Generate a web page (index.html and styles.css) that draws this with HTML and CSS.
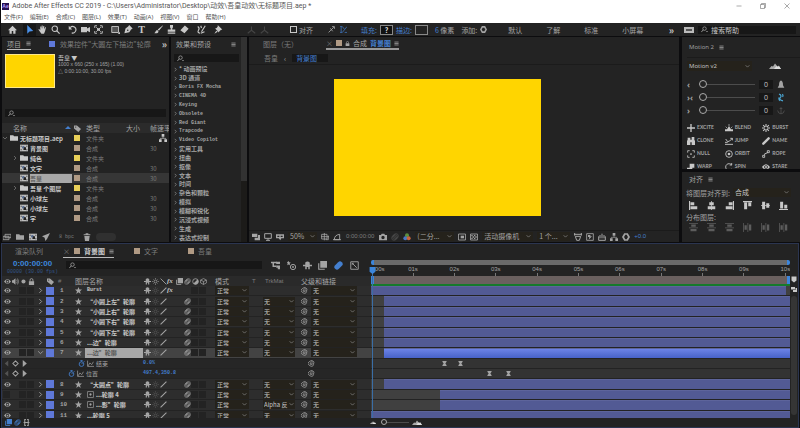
FILE: index.html
```html
<!DOCTYPE html>
<html lang="zh-CN">
<head>
  <meta charset="utf-8">
  <title>Adobe After Effects CC 2019</title>
  <link rel="stylesheet" href="styles.css">
</head>
<body>
  <svg class="sprite" aria-hidden="true">
    <symbol id="home" viewBox="0 0 12 12"><path fill="currentColor" d="M6 1 0 7h2v4.500h3V8h2v3.500h3V7h2z"/></symbol>
    <symbol id="arrow" viewBox="0 0 12 12"><path fill="currentColor" d="M3 0v11.500l3-3 5-.5z"/></symbol>
    <symbol id="hand" viewBox="0 0 12 12"><path fill="currentColor" d="M3 7V2h1.200v3L5 .8h1.200V5l1-3.800h1.200L8 5.500 9.500 3h1.200L9.500 8 8 11.500H4.500L.5 6l1-.8z"/></symbol>
    <symbol id="zoom" viewBox="0 0 12 12"><circle cx="5" cy="5" r="3.600" fill="none" stroke="currentColor" stroke-width="1.400"/><path d="m7.500 7.500 4 4" stroke="currentColor" stroke-width="1.600"/></symbol>
    <symbol id="find" viewBox="0 0 12 12"><circle cx="6" cy="4.500" r="3" fill="none" stroke="currentColor" stroke-width="1.300"/><path d="M4 6.500.5 10.500" stroke="currentColor" stroke-width="1.500"/><path fill="currentColor" d="M8.500 8.500H12l-1.700 2z"/></symbol>
    <symbol id="rotate" viewBox="0 0 12 12"><path d="M3 3.500A4.300 4.300 0 1 1 5 10.500" fill="none" stroke="currentColor" stroke-width="1.500"/><path fill="currentColor" d="M1 1v5h4.500z"/></symbol>
    <symbol id="camera" viewBox="0 0 12 12"><path fill="currentColor" d="M0 2.500h8v2l4-2v7l-4-2v2H0z"/></symbol>
    <symbol id="pan" viewBox="0 0 12 12"><path d="M1 4V1h3M8 1h3v3M11 8v3H8M4 11H1V8M3 3l6 6M9 3 3 9" fill="none" stroke="currentColor" stroke-width="1.200"/><circle cx="6" cy="6" r="1.800" fill="currentColor"/></symbol>
    <symbol id="rect" viewBox="0 0 12 12"><path d="M1 2h9v8H1z" fill="#555" stroke="currentColor" stroke-width="1.200"/><path fill="currentColor" d="M12 9v3H9z"/></symbol>
    <symbol id="pen" viewBox="0 0 12 12"><path fill="currentColor" d="M7 0 5.500 2 2 4.500.5 11 7 9.500l2.500-3.500 2-1.500zM5 6a1 1 0 1 1 0 2 1 1 0 0 1 0-2"/></symbol>
    <symbol id="brush" viewBox="0 0 12 12"><path fill="currentColor" d="M11.500.5 5 6l1.500 1.500L12 1zM4.500 6.800c-2 0-2 2.200-4 4.200 3 .6 5.500-.5 5.500-2.500z"/></symbol>
    <symbol id="stamp" viewBox="0 0 12 12"><path fill="currentColor" d="M4 0h4v3L7 4.500V6h4v3H1V6h4V4.500L4 3zM1 10h10v1.500H1z"/></symbol>
    <symbol id="eraser" viewBox="0 0 12 12"><path fill="currentColor" d="m6.500.5 5 4.500L6 11 .5 7z"/></symbol>
    <symbol id="roto" viewBox="0 0 12 12"><path d="M1 2q3 2 1 5t2 4M6 9l5-8M5 11l5-2M5 1l1 3" fill="none" stroke="currentColor" stroke-width="1.500"/></symbol>
    <symbol id="pin" viewBox="0 0 12 12"><path fill="currentColor" d="M5 0 11 6 9 6.500 7 8.500 6.500 10 1.500 4.500l2-.5L5 2zM3 7.500.5 11.500 5 9z"/></symbol>
    <symbol id="axis" viewBox="0 0 12 12"><path d="M6 2v5L1 11M6 7l5 4" fill="none" stroke="currentColor" stroke-width="1.400"/></symbol>
    <symbol id="snap" viewBox="0 0 12 12"><path d="m1 11 4-4 5-5M7 1h4v4M4 4l4 5" fill="none" stroke="currentColor" stroke-width="1.500"/></symbol>
    <symbol id="bounds" viewBox="0 0 12 12"><path d="M0 1h4L8 6l4-5M0 11h4l4-5M8 11h4M2 1v10" fill="none" stroke="currentColor" stroke-width="1.200"/></symbol>
    <symbol id="menu" viewBox="0 0 12 12"><path d="M1 2.500h10M1 6h10M1 9.500h10" stroke="currentColor" stroke-width="1.800"/></symbol>
    <symbol id="lock" viewBox="0 0 12 12"><path fill="currentColor" d="M1.500 5.500h9V12h-9z"/><path d="M3.500 6V3.500a2.500 2.500 0 0 1 5 0V6" fill="none" stroke="currentColor" stroke-width="1.500"/></symbol>
    <symbol id="folder" viewBox="0 0 12 12"><path fill="currentColor" d="M0 2h5l1 1.500h6V10H0z"/></symbol>
    <symbol id="comp" viewBox="0 0 12 12"><path fill="#bbb" d="M0 1h12v10H0z"/><path fill="#333" d="M1 2.500h1.500v1.500H1zM1 8h1.500v1.500H1zM9.500 2.500H11v1.500H9.500zM9.500 8H11v1.500H9.500z"/><circle cx="5" cy="5" r="2" fill="#566b91"/><path fill="#222" d="M6 5h3v4H5z"/></symbol>
    <symbol id="tag" viewBox="0 0 12 12"><path fill="currentColor" d="M0 1h5l7 6-4.500 5L0 6zM3 2.500a1 1 0 1 0 0 2 1 1 0 0 0 0-2" fill-rule="evenodd"/></symbol>
    <symbol id="tree" viewBox="0 0 12 12"><path fill="currentColor" d="M4 0h4v4H4zM0 8h4v4H0zM8 8h4v4H8z"/><path d="M6 4v2.500M2 8V6.500h8V8" fill="none" stroke="currentColor"/></symbol>
    <symbol id="footage" viewBox="0 0 12 12"><path d="M3 2h9v5H3zM0 5h9v5H0z" fill="#333" stroke="currentColor" stroke-width="1.200"/></symbol>
    <symbol id="rocket" viewBox="0 0 12 12"><path fill="currentColor" d="M12 0 0 5l4 2 1 5 2.500-3z"/></symbol>
    <symbol id="trash" viewBox="0 0 12 12"><path fill="currentColor" d="M1 2h3V.5h4V2h3v1.500H1zM2 4.500h8L9 12H3z"/></symbol>
    <symbol id="eye" viewBox="0 0 12 12"><path fill="currentColor" fill-rule="evenodd" d="M0 6q6-8 12 0-6 8-12 0m6-2.800a2.800 2.800 0 1 0 0 5.600 2.800 2.800 0 0 0 0-5.600"/><circle cx="6" cy="6" r="1.500" fill="currentColor"/></symbol>
    <symbol id="sound" viewBox="0 0 12 12"><path fill="currentColor" d="M0 4h2l4-3.500v11L2 8H0z"/><path d="M8 3q2 3 0 6M9.500 1q3.500 5 0 10" fill="none" stroke="currentColor" stroke-width="1.200"/></symbol>
    <symbol id="dot" viewBox="0 0 12 12"><circle cx="6" cy="6" r="3.500" fill="currentColor"/></symbol>
    <symbol id="shy" viewBox="0 0 12 12"><path fill="currentColor" d="M3 5V2q3-3 6 0v3h3v2H9v4H7V8H5v3H3V7H0V5z"/></symbol>
    <symbol id="sun" viewBox="0 0 12 12"><circle cx="6" cy="6" r="2.500" fill="none" stroke="currentColor" stroke-width="1.300"/><path d="M6 0v2M6 10v2M0 6h2M10 6h2M2 2l1 1M9 9l1 1M10 2 9 3M2 10l1-1" stroke="currentColor"/></symbol>
    <symbol id="slash" viewBox="0 0 12 12"><path d="M1 11 11 1" stroke="currentColor" stroke-width="1.800"/></symbol>
    <symbol id="backslash" viewBox="0 0 12 12"><path d="m1 1 10 10" stroke="currentColor" stroke-width="1.500"/></symbol>
    <symbol id="frames" viewBox="0 0 12 12"><path fill="currentColor" d="M3 0h9v9H3z"/><path d="M1 3v8h8" fill="none" stroke="currentColor" stroke-width="1.500"/></symbol>
    <symbol id="blur" viewBox="0 0 12 12"><g fill="none" stroke="currentColor"><circle cx="7.500" cy="4.500" r="3.500"/><circle cx="6" cy="6" r="3.500"/><circle cx="4.500" cy="7.500" r="3.500"/></g></symbol>
    <symbol id="blur-on" viewBox="0 0 12 12"><path d="m4 8 4-4" stroke="currentColor" stroke-width="7" stroke-linecap="round"/></symbol>
    <symbol id="half" viewBox="0 0 12 12"><circle cx="6" cy="6" r="4.800" fill="none" stroke="currentColor" stroke-width="1.400"/><path fill="currentColor" d="M9.400 2.600A4.800 4.800 0 0 1 2.600 9.400z"/></symbol>
    <symbol id="cube" viewBox="0 0 12 12"><path d="m6 1 5 2.500v5L6 11 1 8.500v-5zM1 3.500 6 6l5-2.500M6 6v5" fill="none" stroke="currentColor" stroke-width="1.200"/></symbol>
    <symbol id="star" viewBox="0 0 12 12"><path fill="currentColor" d="m6 0 1.700 4.200 4.300.2-3.400 2.800L9.800 12 6 9.200 2.200 12l1.200-4.800L0 4.400l4.300-.2z"/></symbol>
    <symbol id="swirl" viewBox="0 0 12 12"><path d="M6 6q1.800-.6 1.500 1T5 8 4 5t4-1.500T9.500 8 6 11 1 8 2 3t5-2 4 3" fill="none" stroke="currentColor" stroke-width="1.300"/></symbol>
    <symbol id="watch" viewBox="0 0 12 12"><circle cx="6" cy="7" r="4" fill="none" stroke="currentColor" stroke-width="1.500"/><path d="M4 .8h4M6 1v2M6 7l2-2M10 2l1.500 1.500" stroke="currentColor" stroke-width="1.300"/></symbol>
    <symbol id="graph" viewBox="0 0 12 12"><path d="M1 1v10h11M2 10l3-5 3 3 3-5" fill="none" stroke="currentColor" stroke-width="1.200"/></symbol>
    <symbol id="matte" viewBox="0 0 12 12"><path d="M1 1h10v10H1z" fill="#222" stroke="currentColor" stroke-width="1.200"/><circle cx="6" cy="6" r="2" fill="currentColor"/></symbol>
    <symbol id="key" viewBox="0 0 12 12"><path fill="currentColor" d="M1 0h10v2L8 6l3 4v2H1v-2l3-4-3-4z"/></symbol>
    <symbol id="prev" viewBox="0 0 12 12"><path fill="currentColor" d="M9 1v10L3 6z"/></symbol>
    <symbol id="next" viewBox="0 0 12 12"><path fill="currentColor" d="M3 0v12l7-6z"/></symbol>
    <symbol id="diamond" viewBox="0 0 12 12"><path d="m6 1.500 4.500 4.500L6 10.500 1.500 6z" fill="none" stroke="currentColor" stroke-width="1.800"/></symbol>
    <symbol id="chevron" viewBox="0 0 12 12"><path d="m4 2 4 4-4 4" fill="none" stroke="currentColor" stroke-width="1.500"/></symbol>
    <symbol id="flow" viewBox="0 0 12 12"><path d="M0 2h8M3 2v5h4" fill="none" stroke="currentColor" stroke-width="2"/><path fill="currentColor" d="M7 1h5v3H7zM7 6h5v5H9V9H7z"/></symbol>
    <symbol id="draft" viewBox="0 0 12 12"><circle cx="8" cy="8" r="3.500" fill="none" stroke="currentColor" stroke-width="1.300"/><circle cx="8" cy="8" r="1.200" fill="currentColor"/><path fill="currentColor" d="m2 0 1 1.500 2 .5-1.500 1.500.5 2L2 4.500 0 5.500 1 3.500 0 2z"/></symbol>
    <symbol id="graph-box" viewBox="0 0 12 12"><path d="M1 1h10v10H1zM3 3l6 6M3 5V3h2" fill="none" stroke="currentColor" stroke-width="1.200"/></symbol>
    <symbol id="monitor" viewBox="0 0 12 12"><path d="M1 1h10v7H1zM6 8v3M3 11h6" fill="none" stroke="currentColor" stroke-width="1.500"/></symbol>
    <symbol id="stack" viewBox="0 0 12 12"><path fill="currentColor" d="M0 1h8v5H0zM4 7h5V3h3v8H4z"/></symbol>
    <symbol id="goggles" viewBox="0 0 12 12"><path fill="currentColor" fill-rule="evenodd" d="M0 2h12v6H8L6.500 11 4 8H0zm2 2v2h3V4zm5 0v2h3V4z"/></symbol>
    <symbol id="grid" viewBox="0 0 12 12"><path d="M1 2h8v7H1zM5 0v11M0 5.500h12M11 4v6H7" fill="none" stroke="currentColor" stroke-width="1.200"/></symbol>
    <symbol id="mask" viewBox="0 0 12 12"><path d="M2 10Q2 3 10 2v8zM0 10h12" fill="none" stroke="currentColor" stroke-width="1.400"/></symbol>
    <symbol id="photo" viewBox="0 0 12 12"><path fill="currentColor" fill-rule="evenodd" d="M0 3h3l1-2h4l1 2h3v8H0zm6 1.200a2.500 2.500 0 1 0 0 5 2.500 2.500 0 0 0 0-5"/></symbol>
    <symbol id="rgb" viewBox="0 0 12 12"><circle cx="6" cy="3.500" r="3" fill="#5b8f3f"/><circle cx="3.500" cy="8" r="3" fill="#4a78c4"/><circle cx="8.500" cy="8" r="3" fill="#c8643c"/></symbol>
    <symbol id="roi" viewBox="0 0 12 12"><path d="M.8 1.500h10.400v9H.8z" fill="none" stroke="currentColor" stroke-width="1.300"/><path fill="currentColor" d="M4 4h5v4H4z"/></symbol>
    <symbol id="checker" viewBox="0 0 12 12"><path d="M.8 1.500h10.400v9H.8z" fill="none" stroke="currentColor" stroke-width="1.300"/><path fill="currentColor" d="M2 3h2v2H2zM6 3h2v2H6zM4 5h2v2H4zM8 5h2v2H8zM2 7h2v2H2zM6 7h2v2H6z"/></symbol>
    <symbol id="ratio" viewBox="0 0 12 12"><path d="M0 2h12M2 5h8l-2 6H4zM1 0v4M11 0v4" fill="none" stroke="currentColor" stroke-width="1.500"/></symbol>
    <symbol id="fast" viewBox="0 0 12 12"><path d="M1 1h10v10H1z" fill="none" stroke="currentColor" stroke-width="1.300"/><path fill="currentColor" d="M3 3h4L6 5h3L4 10l1-4H3z"/></symbol>
    <symbol id="chart" viewBox="0 0 12 12"><path d="M1 5v6h10V5M3 8V3M6 8V1M9 8V3" fill="none" stroke="currentColor" stroke-width="1.500"/></symbol>
    <symbol id="aperture" viewBox="0 0 12 12"><path d="m4 1.500h4L10.500 6 8 10.500H4L1.500 6z" fill="none" stroke="currentColor" stroke-width="2.600"/></symbol>
    <symbol id="hills" viewBox="0 0 24 12"><path fill="#aaa" d="M0 12 5 6l3 1 4-6 5 6 2-2 5 7z"/><path fill="#ddd" d="m10 12 5-6 3 2 2-2 4 6z"/></symbol>
    <symbol id="bell" viewBox="0 0 12 12"><path fill="currentColor" d="M6 0q3 1 3 7l2 4H1l2-4q0-6 3-7"/></symbol>
    <symbol id="bolt" viewBox="0 0 12 12"><path d="M3 1q5 2 2 5t4 5M8 1q2 3 0 4M3 6q-1 3 1 5" fill="none" stroke="currentColor" stroke-width="1.800"/></symbol>
    <symbol id="anchor" viewBox="0 0 12 12"><path d="M6 1v10M1 6q1 5 5 5t5-5M4 3h4" fill="none" stroke="currentColor" stroke-width="1.200"/></symbol>
    <symbol id="plus" viewBox="0 0 12 12"><path d="M6 0v12M0 6h12" stroke="currentColor" stroke-width="2"/></symbol>
    <symbol id="blend" viewBox="0 0 12 12"><path fill="currentColor" d="M0 8h3l3-5 3 5h3v3H0z"/><path d="M6 0v3M1 4l2 2M11 4 9 6" stroke="currentColor"/></symbol>
    <symbol id="burst" viewBox="0 0 12 12"><path d="M6 0v4M6 8v4M0 6h4M8 6h4M1.700 1.700l3 3M7.300 7.300l3 3M10.300 1.700l-3 3M4.700 7.300l-3 3" stroke="currentColor" stroke-width="1.600"/></symbol>
    <symbol id="clone" viewBox="0 0 12 12"><path fill="currentColor" d="M1 4V1h4v3h2V0h4v4l1 2v6H7V8H5v4H0V6z"/></symbol>
    <symbol id="jump" viewBox="0 0 12 12"><path d="M0 11h12M1 3l3 4 3-1 4-4M8 2h3v3M0 8h4" fill="none" stroke="currentColor" stroke-width="1.400"/></symbol>
    <symbol id="pencil" viewBox="0 0 12 12"><path d="m2 10 8-8" stroke="currentColor" stroke-width="3.600" stroke-linecap="round"/></symbol>
    <symbol id="null" viewBox="0 0 12 12"><path d="M1 4V1h3M8 1h3v3M11 8v3H8M4 11H1V8" fill="none" stroke="currentColor" stroke-width="1.200"/><circle cx="6" cy="6" r="1.300" fill="currentColor"/></symbol>
    <symbol id="orbit" viewBox="0 0 12 12"><circle cx="6" cy="6" r="5" fill="none" stroke="currentColor" stroke-width="1.300"/><circle cx="6" cy="6" r="2" fill="currentColor"/></symbol>
    <symbol id="rope" viewBox="0 0 12 12"><path d="M8 1h3v3H8zM1 8h3v3H1zM4 8q-1-3 2-3t2-2" fill="none" stroke="currentColor" stroke-width="1.300"/></symbol>
    <symbol id="warp" viewBox="0 0 12 12"><path fill="currentColor" d="M4 1h7v6H8v3H0V7h4z"/></symbol>
    <symbol id="spin" viewBox="0 0 12 12"><path d="M10 3A5 5 0 1 0 10 9M10 0v3H7" fill="none" stroke="currentColor" stroke-width="1.300"/></symbol>
    <symbol id="al-left" viewBox="0 0 12 12"><path fill="currentColor" d="M0 0h1.500v12H0zM2 1.500h5v4H2zM2 7h9v4H2z"/></symbol>
    <symbol id="al-center" viewBox="0 0 12 12"><path fill="currentColor" d="M5.500 0h1v12h-1zM3 1.500h6v4H3zM1 7h10v4H1z"/></symbol>
    <symbol id="al-right" viewBox="0 0 12 12"><path fill="currentColor" d="M10.500 0H12v12h-1.500zM5 1.500h5v4H5zM1 7h9v4H1z"/></symbol>
    <symbol id="al-top" viewBox="0 0 12 12"><path fill="currentColor" d="M0 0h12v1.500H0zM1.500 2h4v9h-4zM7 2h4v5H7z"/></symbol>
    <symbol id="al-middle" viewBox="0 0 12 12"><path fill="currentColor" d="M0 5.500h12v1H0zM1.500 1h4v10h-4zM7 3h4v6H7z"/></symbol>
    <symbol id="al-bottom" viewBox="0 0 12 12"><path fill="currentColor" d="M0 10.500h12V12H0zM1.500 1h4v9h-4zM7 5h4v5H7z"/></symbol>
    <symbol id="di-rows" viewBox="0 0 12 12"><path fill="currentColor" d="M0 0h12v1H0zM3 2h6v3H3zM0 6h12v1H0zM2 8h8v3H2z"/></symbol>
    <symbol id="di-cols" viewBox="0 0 12 12"><path fill="currentColor" d="M0 0h1v12H0zM2 3h3v6H2zM6 0h1v12H6zM8 2h3v8H8z"/></symbol>
    <symbol id="marker" viewBox="0 0 12 12"><path fill="currentColor" d="M1 0h10v8l-5 4-5-4z"/></symbol>
    <symbol id="minimize" viewBox="0 0 12 12"><path d="M1 6h10" stroke="currentColor"/></symbol>
    <symbol id="restore" viewBox="0 0 12 12"><path d="M1 3h8v8H1zM3 3V1h8v8H9" fill="none" stroke="currentColor"/></symbol>
    <symbol id="close" viewBox="0 0 12 12"><path d="m1 1 10 10M11 1 1 11" stroke="currentColor"/></symbol>
    <symbol id="braces" viewBox="0 0 12 12"><path d="M5 1H3v10h2M7 1h2v10H7M1 6h10" fill="none" stroke="currentColor" stroke-width="1.800"/></symbol>
  </svg>

  <div class="app">
    <header class="titlebar">
      <div class="title">
        <span class="logo">Ae</span>
        <h1>Adobe After Effects CC 2019 - C:\Users\Administrator\Desktop\动效\吾皇动效\无标题项目.aep *</h1>
        <div class="window-buttons">
          <button aria-label="最小化"><svg class="icon"><use href="#minimize"/></svg></button>
          <button aria-label="还原"><svg class="icon"><use href="#restore"/></svg></button>
          <button aria-label="关闭"><svg class="icon"><use href="#close"/></svg></button>
        </div>
      </div>
      <nav class="menu">
        <button>文件(F)</button><button>编辑(E)</button><button>合成(C)</button><button>图层(L)</button><button>效果(T)</button><button>动画(A)</button><button>视图(V)</button><button>窗口</button><button>帮助(H)</button>
      </nav>
    </header>

    <div class="toolbar">
      <div class="tools" id="tools"></div>
      <label class="snap"><input type="checkbox">对齐</label>
      <div class="snap-icons">
        <svg class="icon"><use href="#snap"/></svg>
        <svg class="icon blue"><use href="#bounds"/></svg>
      </div>
      <div class="shape-options">
        <a href="#fill">填充:</a><button class="well">?</button>
        <a href="#stroke">描边:</a><button class="well dark" aria-label="描边颜色"></button>
        <span class="stroke-width"><a href="#width">6</a> 像素</span>
        <span>添加:</span><svg class="icon"><use href="#aperture"/></svg>
      </div>
      <nav class="workspaces">
        <button>默认</button><button>了解</button><button>标准</button><button>小屏幕</button>
      </nav>
      <span class="more">»</span>
      <span class="badge"></span>
      <label class="search help"><svg class="icon"><use href="#find"/></svg><input type="text" placeholder="搜索帮助" aria-label="搜索帮助"></label>
    </div>

    <main class="panels">
      <section class="panel project">
        <div class="tabs">
          <button class="tab active">项目 <svg class="icon"><use href="#menu"/></svg></button>
          <button class="tab dim"><i class="swatch blue-bg"></i>效果控件"大圆左下描边"轮廓</button>
          <span class="more">»</span>
        </div>
        <div class="preview">
          <div class="thumb"></div>
          <div class="info">
            <b>吾皇 <span class="drop">▼</span></b>
            <span>1000 x 660 (250 x 165) (1.00)</span>
            <span>△ 0:00:10:00, 30.00 fps</span>
          </div>
        </div>
        <label class="search"><svg class="icon"><use href="#find"/></svg><input type="text" aria-label="搜索项目"></label>
        <table class="items">
          <colgroup><col class="c-name"><col class="c-tag"><col class="c-type"><col class="c-size"><col></colgroup>
          <thead>
            <tr><th>名称<span class="sort"></span></th><th><svg class="icon"><use href="#tag"/></svg></th><th>类型</th><th>大小</th><th>帧速率</th></tr>
          </thead>
          <tbody id="items"></tbody>
        </table>
        <div class="project-foot">
          <svg class="icon"><use href="#footage"/></svg>
          <svg class="icon"><use href="#folder"/></svg>
          <svg class="icon"><use href="#comp"/></svg>
          <svg class="icon"><use href="#rocket"/></svg>
          <button class="bpc">8 bpc</button>
          <svg class="icon"><use href="#trash"/></svg>
          <span class="hscroll"></span>
        </div>
      </section>

      <section class="panel effects">
        <div class="effects-main">
          <div class="tabs"><button class="tab">效果和预设</button><svg class="icon"><use href="#menu"/></svg></div>
          <label class="search"><svg class="icon"><use href="#find"/></svg><input type="text" aria-label="搜索效果"></label>
          <ul class="effect-list" id="effects"></ul>
        </div>
        <div class="scroll"><span></span></div>
      </section>

      <section class="panel viewer">
        <div class="tabs">
          <button class="tab dim">图层（无）</button>
          <button class="tab active"><span class="x">×</span><i class="swatch sand"></i><svg class="icon"><use href="#lock"/></svg>合成 <b class="blue">背景图</b> <svg class="icon"><use href="#menu"/></svg></button>
        </div>
        <nav class="crumbs"><a href="#wuhuang">吾皇</a><span>‹</span><a class="current" href="#bg">背景图</a></nav>
        <div class="stage"><div class="canvas"></div></div>
        <div class="viewer-foot">
          <svg class="icon"><use href="#stack"/></svg>
          <svg class="icon"><use href="#monitor"/></svg>
          <svg class="icon"><use href="#goggles"/></svg>
          <select class="s-zoom" aria-label="放大率"><option>50%</option></select>
          <svg class="icon"><use href="#grid"/></svg>
          <svg class="icon"><use href="#mask"/></svg>
          <span class="time">0:00:00:00</span>
          <svg class="icon"><use href="#photo"/></svg>
          <svg class="icon faint"><use href="#blur"/></svg>
          <svg class="icon"><use href="#rgb"/></svg>
          <select class="s-res" aria-label="分辨率"><option>(二分...</option></select>
          <svg class="icon"><use href="#roi"/></svg>
          <svg class="icon"><use href="#checker"/></svg>
          <select class="s-cam" aria-label="3D 视图"><option>活动摄像机</option></select>
          <select class="s-view" aria-label="视图布局"><option>1 个...</option></select>
          <svg class="icon"><use href="#ratio"/></svg>
          <svg class="icon"><use href="#fast"/></svg>
          <svg class="icon"><use href="#chart"/></svg>
          <svg class="icon"><use href="#tree"/></svg>
          <svg class="icon"><use href="#aperture"/></svg>
          <a href="#exposure">+0.0</a>
        </div>
      </section>

      <div class="side">
        <section class="panel motion">
          <div class="tabs"><button class="tab">Motion 2</button><svg class="icon"><use href="#menu"/></svg></div>
          <div class="motion-top">
            <select aria-label="Motion 版本"><option>Motion v2</option></select>
            <svg class="hills"><use href="#hills"/></svg>
          </div>
          <div class="slider"><span>‹</span><input type="range" value="0" aria-label="缓入"><output>0</output><svg class="icon"><use href="#bell"/></svg></div>
          <div class="slider"><span>›‹</span><input type="range" value="0" aria-label="缓动"><output>0</output><svg class="icon sky"><use href="#bolt"/></svg></div>
          <div class="slider"><span>›</span><input type="range" value="0" aria-label="缓出"><output>0</output><svg class="icon faint"><use href="#anchor"/></svg></div>
          <div class="actions" id="actions"></div>
        </section>
        <section class="panel align">
          <div class="tabs"><button class="tab">对齐</button><svg class="icon"><use href="#menu"/></svg></div>
          <label class="align-to">将图层对齐到: <select><option>合成</option></select></label>
          <div class="align-row" id="align"></div>
          <div class="align-label">分布图层:</div>
          <div class="align-row faint" id="distribute"></div>
        </section>
      </div>
    </main>

    <section class="timeline">
      <div class="tabs">
        <button class="tab dim">渲染队列</button>
        <button class="tab active"><span class="x">×</span><i class="swatch sand"></i><b>背景图</b> <svg class="icon"><use href="#menu"/></svg></button>
        <button class="tab other dim"><i class="swatch sand"></i>文字</button>
        <button class="tab other dim"><i class="swatch sand"></i>吾皇</button>
      </div>
      <div class="timeline-body">
        <div class="layers">
          <div class="layers-top">
            <div class="clock"><b>0:00:00:00</b><span>00000 (30.00 fps)</span></div>
            <label class="search"><svg class="icon"><use href="#find"/></svg><input type="text" aria-label="搜索图层"></label>
            <div class="comp-switches">
              <svg class="icon"><use href="#flow"/></svg>
              <svg class="icon"><use href="#draft"/></svg>
              <svg class="icon"><use href="#shy"/></svg>
              <svg class="icon"><use href="#frames"/></svg>
              <svg class="icon blue"><use href="#blur-on"/></svg>
              <svg class="icon"><use href="#graph-box"/></svg>
            </div>
          </div>
          <div class="layer-grid layer-head" id="layerHead"></div>
          <div class="clip"><div class="rows" id="layers"></div></div>
        </div>
        <div class="tracks">
          <div class="navigator"></div>
          <div class="ruler" id="ruler"></div>
          <div class="work-area"></div>
          <div class="cache"></div>
          <div class="clip"><div class="rows" id="tracks"></div></div>
          <div class="playhead"><svg class="icon"><use href="#marker"/></svg></div>
        </div>
        <div class="gutter">
          <svg class="icon"><use href="#marker"/></svg>
          <svg class="icon"><use href="#stack"/></svg>
          <span class="vscroll"></span>
        </div>
      </div>
      <div class="timeline-foot">
        <div class="toggles">
          <svg class="icon blue"><use href="#frames"/></svg>
          <svg class="icon blue"><use href="#blur"/></svg>
          <svg class="icon"><use href="#braces"/></svg>
        </div>
        <div class="scale"><svg class="hills small"><use href="#hills"/></svg><input type="range" value="0" aria-label="时间缩放"><svg class="hills"><use href="#hills"/></svg></div>
      </div>
    </section>
  </div>
  <script src="script.js"></script>
</body>
</html>
```

FILE: styles.css
```css
:root {
  --bg: #232323;
  --darker: #171717;
  --black: #0c0c0e;
  --field: #25221b;
  --text: #a4a4a4;
  --dim: #7c7c7c;
  --bright: #c8c8c8;
  --blue: #447fce;
  --yellow: #ffd500;
  --sand: #b09a84;
}

* {
  box-sizing: border-box;
}

body {
  margin: 0;
  background: var(--black);
  color: var(--text);
  font: 7px/10px "Noto Sans CJK SC", sans-serif;
}

button, input, select {
  margin: 0;
  padding: 0;
  border: 0;
  background: none;
  color: inherit;
  font: inherit;
  outline: none;
  min-width: 0;
}

a {
  color: var(--blue);
  text-decoration: none;
}

select {
  appearance: none;
  height: 9px;
  line-height: 9px;
  padding: 0 8px 0 2px;
  color: var(--text);
  background: var(--field) url("data:image/svg+xml,%3Csvg xmlns='http://www.w3.org/2000/svg' viewBox='0 0 8 8'%3E%3Cpath d='m1 2 3 3 3-3' fill='none' stroke='%23999'/%3E%3C/svg%3E") no-repeat right 2px center / 5px 5px;
}

.sprite {
  position: absolute;
  width: 0;
  height: 0;
}

.icon {
  display: block;
  flex: none;
  width: 7px;
  height: 7px;
}

.blue { color: var(--blue); }
.sky { color: #4aa3cf; }
.faint { opacity: 0.35; }
.dim { color: var(--dim); }
.blue-bg { background: #5f78d8; }
.sand { background: var(--sand); }
.yellow { background: #e8cf58; }

.app {
  display: flex;
  flex-direction: column;
  height: 100vh;
  padding-left: 1px;
}

/* title and menu */
.titlebar {
  flex: none;
  height: 23px;
  background: #fff;
  color: #555;
  font-size: 6px;
}

.title {
  display: flex;
  align-items: center;
  height: 12px;
  padding: 0 10px 0 1px;
}

.title h1 {
  flex: 1;
  margin: 0;
  font: 7px/12px Roboto, "Noto Sans CJK SC", sans-serif;
}

.logo {
  width: 7px;
  height: 7px;
  margin-right: 3px;
  background: #241052;
  color: #b9a0ff;
  font: bold 5px/7px "Liberation Sans", sans-serif;
  text-align: center;
}

.window-buttons {
  display: flex;
  gap: 18px;
}

.window-buttons .icon {
  width: 6px;
  height: 6px;
}

.menu {
  display: flex;
  gap: 7px;
  padding-left: 3px;
  font-family: "Noto Sans", "Noto Sans CJK SC", sans-serif;
}

/* toolbar */
.toolbar {
  display: flex;
  align-items: center;
  flex: none;
  height: 13px;
  background: var(--bg);
  padding: 0 4px 0 5px;
}

.tools {
  display: flex;
  gap: 4px;
  width: 280px;
}

.tool-group {
  display: flex;
}

.tool-group button {
  display: grid;
  place-items: center;
  width: 13px;
  height: 12px;
  color: var(--bright);
  font: bold 10px/12px "Liberation Serif", serif;
}

.tool-group .icon {
  width: 9px;
  height: 9px;
}

.tool-group button.on {
  background: var(--darker);
  color: #4a90e8;
}

.tool-group.off {
  opacity: 0.2;
  margin-left: 16px;
}

.snap {
  display: flex;
  align-items: center;
  gap: 2px;
  margin-left: 4px;
}

.snap input {
  appearance: none;
  width: 7px;
  height: 7px;
  border: 1px solid var(--bright);
}

.snap-icons {
  display: flex;
  gap: 5px;
  margin-left: 15px;
}

.shape-options {
  display: flex;
  align-items: center;
  gap: 3px;
  margin-left: 14px;
}

.shape-options > span {
  margin-left: 4px;
}

.well {
  width: 13px;
  height: 10px;
  border: 1px solid #888;
  background: #111;
  color: #eee;
  font-weight: bold;
  line-height: 8px;
}

.well.dark {
  background: #222;
}

.workspaces {
  display: flex;
  flex: 1;
  gap: 24px;
  margin-left: 21px;
}

.more {
  color: var(--bright);
  font-size: 10px;
  font-weight: bold;
}

.badge {
  width: 10px;
  height: 6px;
  margin: 0 4px 0 10px;
  border: 2px solid #bbb;
  background: #555;
}

.search {
  display: flex;
  align-items: center;
  flex: none;
  height: 8px;
  padding: 0 3px;
  background: var(--darker);
}

.search input {
  flex: 1;
  width: 20px;
  margin-left: 3px;
}

.search input::placeholder {
  color: var(--bright);
}

.help {
  width: 98px;
}

/* panels */
.panels {
  display: flex;
  flex: none;
  gap: 2px;
  height: 206px;
  padding: 1px 0 0 1px;
}

.panel {
  display: flex;
  flex-direction: column;
  background: var(--bg);
  overflow: hidden;
}

.tabs {
  display: flex;
  align-items: center;
  flex: none;
  height: 14px;
}

.tab {
  display: flex;
  align-items: center;
  gap: 3px;
  height: 12px;
  border-bottom: 1px solid transparent;
  white-space: nowrap;
}

.tab.active {
  border-color: #bbb;
}

.tabs .icon {
  width: 5px;
  height: 5px;
}

.swatch {
  display: inline-block;
  flex: none;
  width: 6px;
  height: 6px;
}

.x {
  color: var(--dim);
}

.project {
  width: 167px;
}

.project .tabs {
  padding: 0 2px 0 5px;
  gap: 18px;
}

.project .tab.active {
  gap: 5px;
}

.project .tab.dim {
  flex: 1;
  overflow: hidden;
}

.project .tab .swatch {
  margin-right: 2px;
}

.project .more {
  margin-left: -16px;
}

.preview {
  display: flex;
  gap: 3px;
  height: 58px;
  padding: 3px 0 0 3px;
}

.thumb {
  width: 50px;
  height: 34px;
  background: var(--yellow);
  border: 1px solid #ffe98a;
}

.info {
  display: flex;
  flex-direction: column;
  font: 5px/7px "Liberation Sans", sans-serif;
}

.info b {
  color: var(--bright);
  font: 6px/7px "Noto Sans CJK SC", sans-serif;
}

.project .search {
  margin: 0 3px 6px;
}

.items {
  width: 100%;
  table-layout: fixed;
  border-collapse: collapse;
  font-size: 6px;
}

.c-name { width: 70px; }
.c-tag { width: 12px; }
.c-type { width: 40px; }
.c-size { width: 24px; }

.items tr {
  height: 10px;
}

.items th, .items td {
  padding: 0 0 0 2px;
  line-height: 9px;
  overflow: hidden;
  text-align: left;
  white-space: nowrap;
}

.items th {
  background: #2b2b2b;
  font-size: 7px;
  font-weight: normal;
}

.items th:first-child {
  padding-left: 11px;
}

.items td {
  color: var(--dim);
}

.items td:first-child {
  padding: 0;
}

.items td .tree {
  margin-left: 9px;
  color: var(--bright);
}

.sort {
  display: inline-block;
  margin: 0 0 2px 38px;
  border: 3px solid transparent;
  border-top: 0;
  border-bottom-color: var(--blue);
}

.items .swatch {
  display: block;
}

.item-name {
  display: flex;
  align-items: center;
  gap: 2px;
  padding-left: 18px;
  color: var(--bright);
}

.item-name b {
  flex: 1;
}

.item-name.branch {
  padding-left: 10px;
}

.item-name.root {
  padding-left: 0;
}

.items .selected {
  background: #363636;
}

.items .selected b {
  background: #a8a8a8;
  color: #666;
}

.items td .icon {
  width: 8px;
  height: 8px;
}

.items td .fold {
  width: 6px;
  height: 6px;
  color: var(--dim);
}

.fold.open {
  transform: rotate(90deg);
}

.project-foot {
  display: flex;
  align-items: center;
  gap: 5px;
  margin-top: auto;
  padding: 0 1px 1px;
}

.project-foot .icon {
  width: 8px;
  height: 8px;
}

.bpc {
  margin: 0 4px;
  color: var(--dim);
  font: 5px/8px "Liberation Mono", monospace;
}

.hscroll {
  width: 20px;
  height: 8px;
  border-radius: 4px;
  background: #303030;
}

.effects {
  flex-direction: row;
  width: 76px;
}

.effects-main {
  display: flex;
  flex: 1;
  flex-direction: column;
  padding-left: 2px;
}

.effects .tabs {
  justify-content: space-between;
  padding: 0 5px 0 3px;
}

.effects .search {
  margin: 3px 2px 3px 1px;
}

.effect-list {
  display: grid;
  flex: 1;
  grid-auto-rows: 1fr;
  margin: 0;
  padding: 0;
  list-style: none;
  font-size: 6px;
  font-weight: bold;
}

.effect-list li {
  display: flex;
  align-items: center;
  gap: 1px;
  white-space: nowrap;
  line-height: 8px;
}

.effect-list .icon {
  width: 5px;
  height: 5px;
}

.mono {
  font: bold 5px/8px "Liberation Mono", monospace;
}

.scroll {
  width: 6px;
  background: #1c1b19;
}

.scroll span {
  display: block;
  height: 70%;
  background: #323232;
}

.viewer {
  flex: 1;
}

.viewer .tabs {
  gap: 28px;
  padding-left: 14px;
}

.viewer .tab.active {
  border-width: 2px;
  border-bottom-color: #999;
}

.crumbs {
  display: flex;
  align-items: center;
  gap: 6px;
  flex: none;
  height: 14px;
  padding-left: 15px;
  border-bottom: 1px solid #1b1b1b;
}

.crumbs a:first-child {
  color: var(--dim);
}

.crumbs .current {
  width: 36px;
  padding-left: 4px;
  background: var(--darker);
  line-height: 8px;
}

.stage {
  display: grid;
  flex: 1;
  grid-template-columns: 85fr 208fr 138fr;
  align-items: start;
  padding-top: 14px;
}

.canvas {
  grid-column: 2;
  aspect-ratio: 250 / 165;
  background: var(--yellow);
}

.viewer-foot {
  display: flex;
  align-items: center;
  gap: 4px;
  height: 12px;
  padding-left: 3px;
  border-top: 1px solid #1b1b1b;
}

.viewer-foot .icon {
  width: 8px;
  height: 8px;
}

.viewer-foot select {
  border-radius: 0;
}

.s-zoom {
  width: 29px;
}

.s-res {
  width: 39px;
}

.s-cam {
  width: 51px;
}

.s-view {
  width: 33px;
}

.time {
  margin: 0 1px;
  color: var(--dim);
  font: 6px/9px "Liberation Sans", sans-serif;
}

.viewer-foot a {
  font: 6px/9px "Liberation Sans", sans-serif;
}

.side {
  display: flex;
  flex-direction: column;
  gap: 3px;
  width: 118px;
  margin-left: 1px;
}

.side .tabs {
  gap: 5px;
}

.motion {
  height: 132px;
  padding-left: 5px;
  font-family: "Open Sans", "Noto Sans CJK SC", sans-serif;
  font-size: 6px;
}

.motion .tabs {
  height: 20px;
  padding-left: 2px;
}

.motion-top {
  display: flex;
  align-items: center;
  flex: none;
  gap: 14px;
  height: 17px;
  margin-bottom: 4px;
  border-top: 1px solid #1b1b1b;
}

.motion-top select {
  width: 65px;
  height: 10px;
  color: var(--bright);
}

.hills {
  width: 18px;
  height: 6px;
}

.slider {
  display: grid;
  flex: none;
  grid-template-columns: 8px 56px 14px 8px;
  align-items: center;
  column-gap: 4px;
  height: 13px;
}

.slider span {
  font-weight: bold;
  font-size: 8px;
}

.slider output {
  background: var(--darker);
  color: var(--bright);
  font-size: 7px;
  line-height: 9px;
  text-align: center;
}

.slider .icon {
  width: 8px;
  height: 9px;
}

.slider input, .scale input {
  appearance: none;
  width: 100%;
  height: 9px;
}

.slider input::-webkit-slider-runnable-track,
.scale input::-webkit-slider-runnable-track {
  height: 1px;
  background: #4c4c4c;
}

.slider input::-webkit-slider-thumb,
.scale input::-webkit-slider-thumb {
  appearance: none;
  width: 8px;
  height: 8px;
  margin-top: -4px;
  border: 1px solid #aaa;
  border-radius: 50%;
  background: var(--bg);
}

.scale input::-webkit-slider-thumb {
  width: 6px;
  height: 6px;
  margin-top: -3px;
}

.actions {
  display: grid;
  flex: none;
  grid-template-columns: repeat(3, 1fr);
  margin-top: 4px;
}

.actions button {
  display: flex;
  align-items: center;
  gap: 2px;
  height: 13px;
  font: bold 5px/13px Lato, sans-serif;
}

.actions .icon {
  width: 8px;
  height: 8px;
  color: var(--bright);
}

.align {
  flex: 1;
  padding-left: 4px;
}

.align .tabs {
  padding-left: 3px;
}

.align-to {
  display: flex;
  gap: 3px;
  padding: 2px 9px 2px 0;
}

.align-to select {
  flex: 1;
  color: var(--bright);
}

.align-row {
  display: flex;
  gap: 9px;
  padding: 1px 3px 3px;
}

.align-row .icon {
  width: 9px;
  height: 9px;
  color: var(--bright);
}

.align-label {
  line-height: 9px;
}

/* timeline */
.timeline {
  display: flex;
  flex: 1;
  flex-direction: column;
  min-height: 0;
  margin: 1px 1px 0 0;
  border: 1px solid #2b3550;
  background: var(--bg);
}

.timeline .tabs {
  height: 15px;
  gap: 20px;
  padding-left: 13px;
}

.timeline .tab {
  gap: 4px;
}

.timeline .tab.other {
  min-width: 34px;
}

.timeline .tab b {
  color: var(--bright);
}

.timeline-body {
  display: flex;
  flex: 1;
  min-height: 0;
}

.layers {
  display: flex;
  flex-direction: column;
  width: 369px;
  font-size: 6px;
}

.layers-top {
  display: flex;
  flex: none;
  height: 17px;
  padding: 0 12px 0 5px;
}

.clock {
  display: flex;
  flex-direction: column;
  width: 59px;
}

.clock b {
  padding-left: 6px;
  color: #3c86dc;
  font: bold 8px/10px "Liberation Sans", sans-serif;
}

.clock span {
  color: #33558a;
  font: 5px/6px "Liberation Mono", monospace;
  white-space: nowrap;
}

.layers-top .search {
  width: 196px;
  margin-top: 2px;
}

.comp-switches {
  display: flex;
  flex: 1;
  align-items: center;
  justify-content: space-between;
  padding-left: 9px;
  height: 13px;
}

.comp-switches .icon {
  width: 9px;
  height: 9px;
}

.layer-grid {
  display: grid;
  grid-template-columns: repeat(4, 8px) 10px 10px 16px 14px 58px repeat(8, 8px) 8px 34px 13px 35px 14px 46px;
  align-items: center;
  padding-left: 1px;
  background: #2d2d2d;
}

.layer-grid > .icon, .layer-grid > .swatch {
  justify-self: center;
}

.layer-head {
  flex: none;
  height: 10px;
  background: #2a2a2a;
  font-size: 7px;
  white-space: nowrap;
}

.layer-head .latin {
  font: 6px/9px "Liberation Sans", sans-serif;
  color: var(--dim);
  padding-left: 3px;
}

.layer-head .wide {
  grid-column: span 2;
  padding-left: 4px;
}

.fx {
  color: var(--bright);
  font: italic bold 7px/9px "Liberation Serif", serif;
}

.clip {
  flex: 1;
  overflow: hidden;
}

/* thirteen rows, the last one cut by the footer */
.rows {
  display: grid;
  height: 134px;
  grid-auto-rows: minmax(0, 1fr);
  row-gap: 1px;
}

.row .icon {
  color: var(--text);
}

.row .off {
  width: 7px;
  height: 7px;
  background: #232323;
}

.row .num {
  padding-left: 5px;
  font: bold 6px/9px "Liberation Mono", monospace;
}

.row .swatch {
  width: 8px;
  height: 8px;
}

.layer-name {
  display: flex;
  align-items: center;
  gap: 2px;
  height: 100%;
  padding-left: 2px;
  overflow: hidden;
  color: var(--bright);
  font-weight: bold;
  line-height: 9px;
  white-space: nowrap;
}

.layer-name.mono {
  font: bold 5px/9px "Liberation Mono", monospace;
}

.row.selected {
  background: #434343;
}

.row.selected .layer-name {
  background: #a8a8a8;
  color: #555;
}

.row select {
  justify-self: stretch;
  color: var(--bright);
}

.row .trk {
  margin: 0 2px 0 1px;
  padding: 0 6px 0 1px;
  background-position: right 1px center;
}

.prop {
  display: grid;
  grid-template-columns: 24px 116px 158px 1fr;
  align-items: center;
  padding-left: 1px;
  background: #262626;
}

.prop > span {
  display: flex;
  align-items: center;
  gap: 2px;
  line-height: 9px;
}

.prop .level-1 { padding-left: 41px; }
.prop .level-2 { padding-left: 51px; }

.prop .icon.watch {
  color: var(--blue);
}

.prop a {
  font: bold 5px/9px "Liberation Mono", monospace;
}

.prop .link {
  padding-left: 7px;
}

.tracks {
  position: relative;
  display: flex;
  flex: 1;
  flex-direction: column;
  min-width: 0;
}

.navigator {
  flex: none;
  height: 5px;
  margin-top: 1px;
  background: #6a6a6a;
  border: solid #3c86dc;
  border-width: 0 3px;
  border-radius: 2px;
}

.ruler {
  flex: none;
  height: 11px;
  overflow: hidden;
}

.ruler div {
  display: grid;
  grid-template-columns: repeat(11, 1fr);
  margin: 0 -16px 0 -20px;
}

.ruler span {
  font: 6px/8px "Liberation Sans", sans-serif;
  text-align: center;
}

.ruler span::after {
  content: "";
  display: block;
  width: 1px;
  height: 3px;
  margin: 0 auto;
  background: #777;
}

/* keeps the zero clear of the playhead */
.ruler span:first-child {
  padding-left: 16px;
}

.ruler span:first-child::after {
  display: none;
}

.work-area {
  flex: none;
  height: 8px;
  background: #6a605f;
  border: solid #3c86dc;
  border-width: 0 3px;
}

.cache {
  flex: none;
  height: 2px;
  background: #157a2c;
}

.track {
  background: #333;
}

.track.stub {
  background: #404040;
}

.keys {
  position: relative;
}

.bar {
  height: 100%;
  background: #525a94;
  border-top: 1px solid #5d649b;
}

.bar.selected {
  background: linear-gradient(#6c83e6, #4762c8);
}

.keys .icon {
  position: absolute;
  top: 2px;
  width: 5px;
  height: 5px;
}

.playhead {
  position: absolute;
  top: 8px;
  bottom: 0;
  left: 1px;
  border-left: 1px solid #3b6ea5;
}

.playhead .icon {
  margin-left: -4px;
  color: #3c86dc;
}

.gutter {
  display: flex;
  flex-direction: column;
  align-items: center;
  gap: 3px;
  width: 8px;
  padding-top: 17px;
  color: var(--bright);
}

.gutter .icon {
  width: 6px;
}

.vscroll {
  flex: 1;
  width: 6px;
  margin-bottom: 3px;
  border-radius: 3px;
  background: #353535;
}

.timeline-foot {
  display: flex;
  flex: none;
  height: 9px;
  align-items: center;
}

.toggles {
  display: flex;
  gap: 2px;
  width: 368px;
  padding-left: 3px;
}

.scale {
  display: grid;
  grid-template-columns: 8px 28px 10px;
  align-items: center;
  gap: 3px;
}

.scale .hills {
  width: 10px;
  height: 5px;
}

.scale .small {
  width: 6px;
  height: 3px;
}
```

FILE: script.js
```js
const icon = (name, cls = '') => `<svg class="icon ${cls}"><use href="#${name}"/></svg>`;
const fill = (id, html) => { document.getElementById(id).innerHTML = html; };
const isLatin = (s) => /^[\x20-\x7e]+$/.test(s);

// toolbar
const toolGroups = [
  ['home'],
  ['arrow', 'hand', 'zoom'],
  ['rotate', 'camera', 'pan'],
  ['rect', 'pen', 'T'],
  ['brush', 'stamp', 'eraser'],
  ['roto'],
  ['pin'],
];
fill('tools', toolGroups.map((group) => `<div class="tool-group">${group.map((t) =>
  `<button class="${t === 'arrow' ? 'on' : ''}" aria-label="${t}">${t === 'T' ? 'T' : icon(t)}</button>`).join('')}</div>`).join('')
  + `<div class="tool-group off"><button aria-label="axis">${icon('axis')}</button><button aria-label="world">${icon('axis')}</button></div>`);

// project items
const items = [
  { name: '无标题项目.aep', folder: true, kind: 'root' },
  { name: '背景图' },
  { name: '纯色', folder: true, kind: 'branch' },
  { name: '文字' },
  { name: '吾皇', selected: true },
  { name: '吾皇 个图层', folder: true, kind: 'branch' },
  { name: '小球左' },
  { name: '小球左' },
  { name: '字' },
];
const rate = (it) => {
  if (it.kind === 'root') return icon('tree', 'tree');
  return it.folder ? '' : '30';
};
fill('items', items.map((it) => `
  <tr class="${it.selected ? 'selected' : ''}">
    <td><span class="item-name ${it.kind || ''}">${it.folder ? icon('chevron', it.kind === 'root' ? 'fold open' : 'fold') : ''}${icon(it.folder ? 'folder' : 'comp')}<b>${it.name}</b></span></td>
    <td><i class="swatch ${it.folder ? 'yellow' : 'sand'}"></i></td>
    <td>${it.folder ? '文件夹' : '合成'}</td>
    <td></td>
    <td>${rate(it)}</td>
  </tr>`).join(''));

// effects and presets
const effects = ['* 动画预设', '3D 通道', 'Boris FX Mocha', 'CINEMA 4D', 'Keying', 'Obsolete', 'Red Giant', 'Trapcode',
  'Video Copilot', '实用工具', '扭曲', '抠像', '文本', '时间', '杂色和颗粒', '模拟', '模糊和锐化', '沉浸式视频', '生成', '表达式控制'];
fill('effects', effects.map((e) => `<li>${icon('chevron')}<span class="${isLatin(e) ? 'mono' : ''}">${e}</span></li>`).join(''));

// motion buttons
const actions = [['plus', 'EXCITE'], ['blend', 'BLEND'], ['burst', 'BURST'], ['clone', 'CLONE'], ['jump', 'JUMP'], ['pencil', 'NAME'],
  ['null', 'NULL'], ['orbit', 'ORBIT'], ['rope', 'ROPE'], ['warp', 'WARP'], ['spin', 'SPIN'], ['eye', 'STARE']];
fill('actions', actions.map(([i, label]) => `<button>${icon(i)}${label}</button>`).join(''));

fill('align', ['left', 'center', 'right', 'top', 'middle', 'bottom'].map((a) => `<button aria-label="${a}">${icon('al-' + a)}</button>`).join(''));
fill('distribute', ['rows', 'rows', 'rows', 'cols', 'cols', 'cols'].map((d) => `<button aria-label="${d}">${icon('di-' + d)}</button>`).join(''));

// timeline, start and keys are seconds
const VISIBLE = 10.1;
const layers = [
  { n: 1, name: 'Burst', start: 0, end: 10, fx: true },
  { n: 2, name: '“小圆上左”轮廓', start: 0.3 },
  { n: 3, name: '“小圆上右”轮廓', start: 0.3 },
  { n: 4, name: '“小圆下右”轮廓', start: 0.3 },
  { n: 5, name: '“小圆下左”轮廓', start: 0.3 },
  { n: 6, name: '...边”轮廓', start: 0.3 },
  { n: 7, name: '...边”轮廓', start: 0.3, selected: true },
  { prop: '结束', value: '0.0%', level: 2, keys: [1.72, 2.1] },
  { prop: '位置', value: '497.4,350.8', level: 1, keys: [2.8, 3.25] },
  { n: 8, name: '“大圆点”轮廓', start: 0.3 },
  { n: 9, name: '...轮廓 4', start: 1.67, matte: true, hidden: true },
  { n: 10, name: '...影”轮廓', start: 1.67, matte: true, trk: 'Alpha 反' },
  { n: 11, name: '...轮廓 5', start: 0 },
];
const off = '<i class="off"></i>';
const select = (value, label, cls = '') => `<select class="${cls}" aria-label="${label}"><option>${value}</option></select>`;

fill('layerHead', [
  icon('eye'), icon('sound'), icon('dot'), icon('lock'), '<span></span>', icon('tag'), '<span class="latin">#</span>',
  '<span class="wide">图层名称</span>',
  icon('shy'), icon('sun'), icon('backslash'), '<span class="fx">fx</span>', icon('frames'), icon('blur'), icon('half'), icon('cube'),
  '<span></span>', '<span>模式</span>', '<span class="latin">T</span>', '<span class="latin">TrkMat</span>', '<span class="wide">父级和链接</span>',
].join(''));

fill('layers', layers.map((l) => (l.prop ? `
  <div class="row prop">
    <span>${icon('prev', 'faint')}${icon('diamond')}${icon('next')}</span>
    <span class="level-${l.level}">${icon('watch', 'watch')}${icon('graph')}${l.prop}</span>
    <a href="#value">${l.value}</a>
    <span class="link">${icon('swirl')}</span>
  </div>` : `
  <div class="row layer-grid ${l.selected ? 'selected' : ''}">
    ${l.hidden ? off : icon('eye')}<span></span>${off}${off}
    ${icon('chevron', l.selected ? 'fold open' : 'fold')}<i class="swatch blue-bg"></i><span class="num">${l.n}</span>${icon('star')}
    <span class="layer-name ${isLatin(l.name) ? 'mono' : ''}">${l.matte ? icon('matte') : ''}${l.name}</span>
    ${icon('shy')}${icon('sun', 'faint')}${icon('slash')}${l.fx ? '<span class="fx">fx</span>' : '<span></span>'}<span></span>${l.fx ? '<span></span>' : icon('blur')}${off}${off}
    <span></span>${select('正常', '模式')}<span>${off}</span>
    ${l.n === 1 ? '<span></span>' : select(l.trk || '无', '轨道遮罩', 'trk')}${icon('swirl')}${select('无', '父级')}
  </div>`)).join(''));

const pct = (s) => `${(s / VISIBLE * 100).toFixed(1)}%`;
fill('tracks', layers.map((l) => (l.prop
  ? `<div class="track keys">${l.keys.map((k) => `<svg class="icon" style="left:${pct(k)}"><use href="#key"/></svg>`).join('')}</div>`
  : `<div class="track stub"><div class="bar ${l.selected ? 'selected' : ''}" style="margin-left:${pct(l.start)};width:${pct((l.end || VISIBLE) - l.start)}"></div></div>`)).join(''));

fill('ruler', `<div>${Array.from({ length: 11 }, (_, i) => `<span>${String(i).padStart(2, '0')}s</span>`).join('')}</div>`);
```
